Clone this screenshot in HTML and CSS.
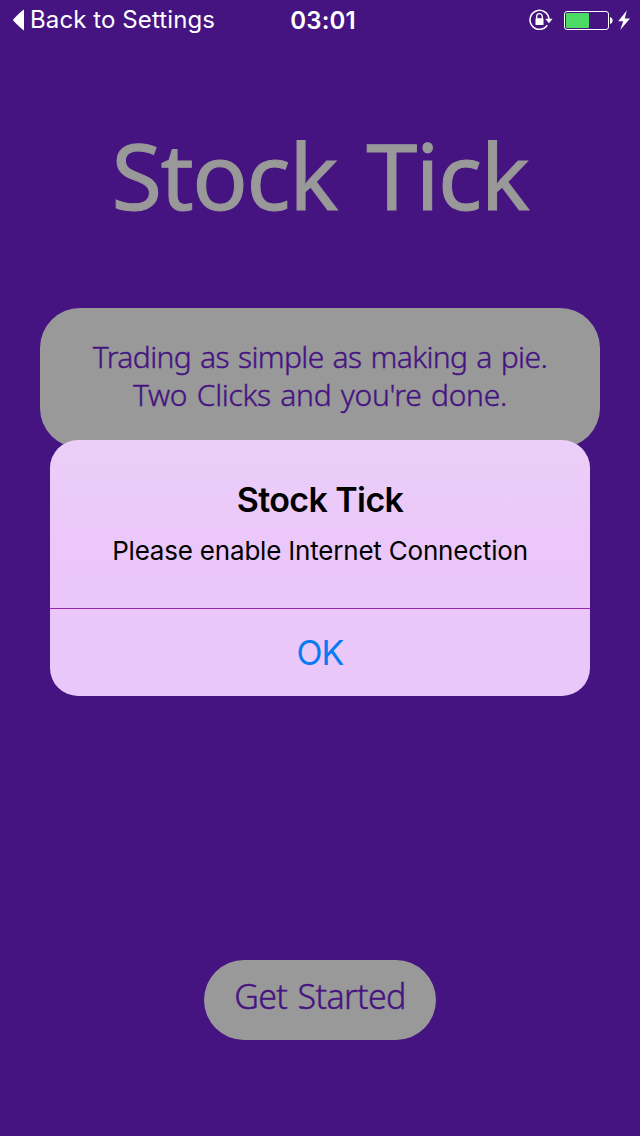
FILE: index.html
```html
<!DOCTYPE html>
<html lang="en">
<head>
<meta charset="utf-8">
<title>Stock Tick</title>
<link rel="stylesheet" href="styles.css">
</head>
<body>
<div class="screen">
  <header class="status">
    <div class="back">
      <svg width="13" height="22" viewBox="0 0 13 22"><path d="M12 .5v21Q7.500 18.500.8 11 7.500 3.500 12 .5z" fill="#fff"/></svg>
      <span class="back-label">Back to Settings</span>
    </div>
    <div class="clock">03:01</div>
    <div class="indicators">
      <svg width="103" height="24" viewBox="0 0 103 24" fill="none">
        <path d="M19.300 17.300A9.500 9.500 0 1 1 21 11" stroke="#fff" stroke-width="1.500"/>
        <path d="M17.200 10.800h7.400l-3.700 4.400z" fill="#fff"/>
        <path d="M8.700 11V8.500a2.800 2.800 0 0 1 5.600 0V11" stroke="#fff" stroke-width="1.300"/>
        <rect x="7.500" y="10.300" width="8" height="6.700" rx=".6" fill="#fff"/>
        <rect x="36.500" y="3.500" width="44" height="18" rx="2.500" stroke="#fff" stroke-width="1"/>
        <rect x="38" y="5" width="23" height="15" rx="1" fill="#4cd964"/>
        <path d="M82 9q2.700.7 2.700 3.500T82 16z" fill="#fff"/>
        <path d="M98.800 2.500l-8.600 10.700h5L92.200 22l9.800-11.600h-5.300z" fill="#fff"/>
      </svg>
    </div>
  </header>
  <h1 class="title">Stock Tick</h1>
  <div class="tagline">
    <p class="line line-one">Trading as simple as making a pie.</p>
    <p class="line line-two">Two Clicks and you're done.</p>
  </div>
  <button class="start"><span class="start-label">Get Started</span></button>
  <div class="alert" role="alertdialog">
    <div class="alert-body">
      <h2 class="alert-title">Stock Tick</h2>
      <p class="alert-message">Please enable Internet Connection</p>
    </div>
    <button class="alert-ok">OK</button>
  </div>
</div>
</body>
</html>
```
FILE: styles.css
```css
* { box-sizing: border-box; margin: 0; padding: 0; }
body { background: #451481; }
button { border: 0; background: none; display: block; }
.screen {
  position: relative;
  width: 640px;
  height: 1136px;
  overflow: hidden;
  background: #451481;
  display: flex;
  flex-direction: column;
  align-items: center;
  font-family: "Noto Sans", sans-serif;
}
.status {
  width: 640px;
  height: 40px;
  display: grid;
  grid-template-columns: 1fr auto 1fr;
  align-items: center;
  padding: 0 9px 0 12px;
  color: #fff;
  font-family: Inter, sans-serif;
  font-size: 24px;
}
.back { display: flex; align-items: center; gap: 5px; padding-bottom: 1px; white-space: nowrap; }
.back-label { letter-spacing: .1px; }
.clock { font-weight: 600; padding-left: 3px; letter-spacing: .2px; }
.indicators { display: flex; justify-content: flex-end; }
.title {
  height: 126px;
  margin-top: 72px;
  line-height: 126px;
  font-size: 92px;
  font-weight: 400;
  letter-spacing: -1.5px;
  word-spacing: 7px;
  -webkit-text-stroke: 1px #999;
  color: #999;
  white-space: nowrap;
}
.tagline {
  width: 560px;
  height: 140px;
  margin-top: 70px;
  padding-top: 30px;
  border-radius: 40px;
  background: #999;
  color: #451481;
  text-align: center;
}
.line {
  font-size: 30px;
  font-weight: 300;
  line-height: 38px;
  white-space: nowrap;
  -webkit-text-stroke: .4px #451481;
}
.line-one { letter-spacing: -.6px; word-spacing: 1.700px; }
.line-two { letter-spacing: -.3px; word-spacing: 2px; }
.start {
  width: 232px;
  height: 80px;
  margin-top: 512px;
  padding-bottom: 8px;
  border-radius: 40px;
  background: #999;
  color: #451481;
  font: 300 34px "Noto Sans", sans-serif;
  letter-spacing: -.6px;
  word-spacing: 2px;
  -webkit-text-stroke: .4px #451481;
}
.alert {
  position: absolute;
  left: 50px;
  top: 440px;
  width: 540px;
  height: 256px;
  border-radius: 28px;
  overflow: hidden;
  background: linear-gradient(#ebcff8, #ebc8f9 35%, #e9c7f8);
  color: #000;
  font-family: Inter, sans-serif;
  text-align: center;
}
.alert-body { height: 169px; padding-top: 40px; border-bottom: 1px solid #9527ac; }
.alert-title { font-size: 34px; line-height: 40px; font-weight: 600; letter-spacing: -.6px; }
.alert-message { margin-top: 15px; font-size: 26px; line-height: 32px; letter-spacing: -.2px; }
.alert-ok {
  width: 100%;
  height: 87px;
  color: #087bf2;
  font: 400 34px Inter, sans-serif;
  letter-spacing: -.8px;
}
```
